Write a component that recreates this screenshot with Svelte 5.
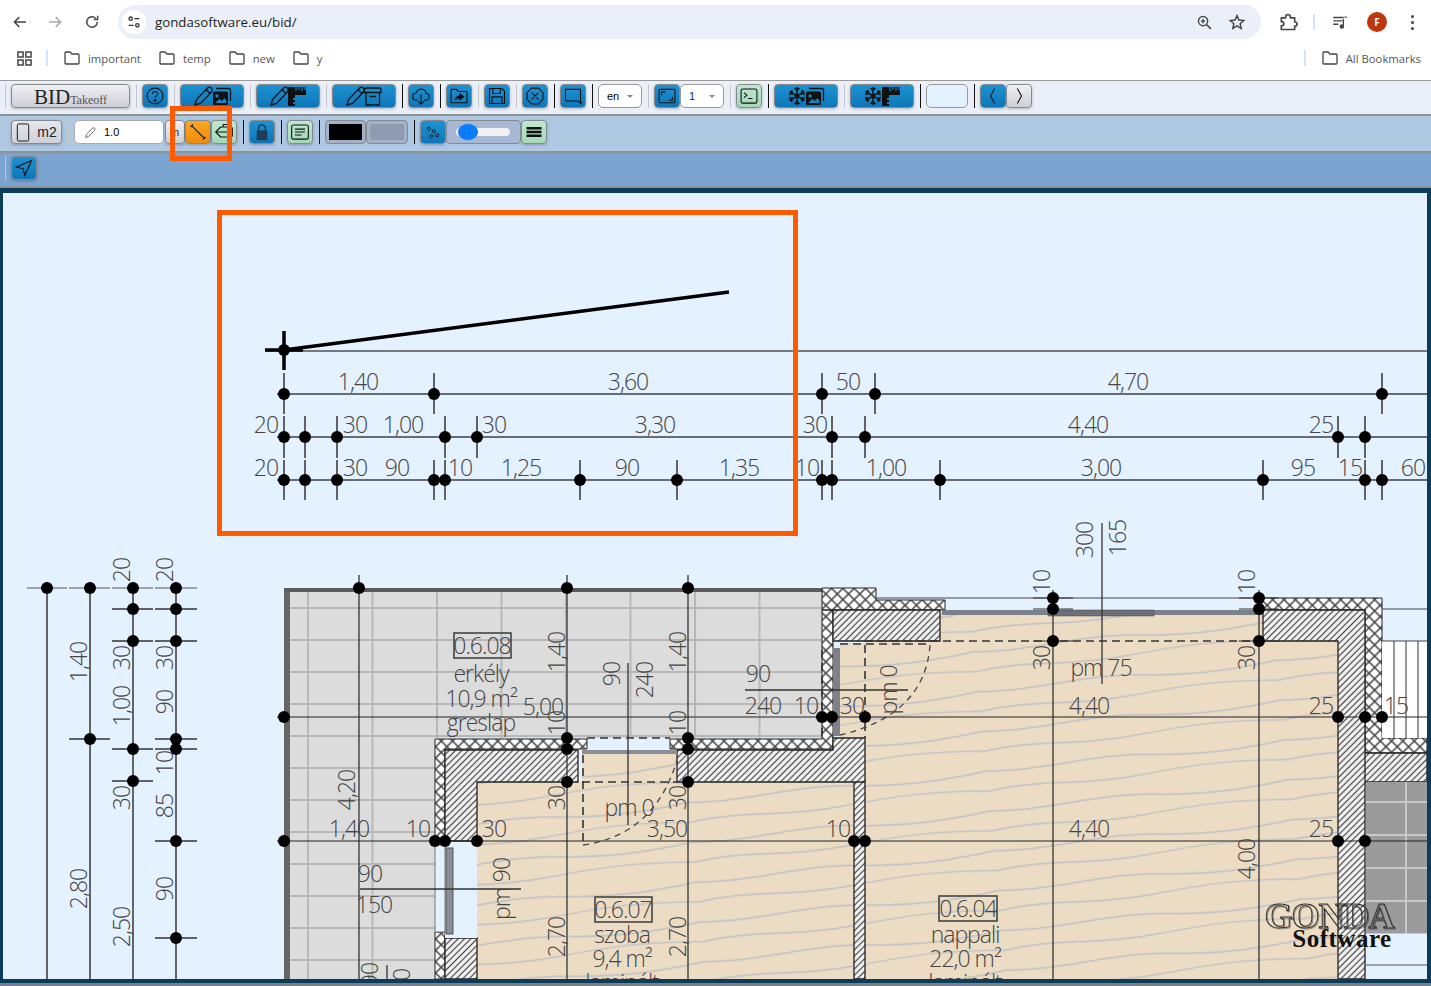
<script>
	// measured drawing data, page coordinates
	const topRows = [
		{ y: 394, t: 373, b: 414, x0: 277, xs: [284, 434, 822, 875, 1382] },
		{ y: 437, t: 416, b: 458, x0: 277, xs: [284, 305, 337, 445, 477, 832, 865, 1338, 1365] },
		{ y: 480, t: 460, b: 500, x0: 277, xs: [284, 305, 337, 434, 445, 580, 677, 822, 832, 940, 1263, 1365, 1382] }
	];
	const leftCols = [
		{ x: 47, l: 27, r: 67, ys: [588] },
		{ x: 90, l: 69, r: 110, ys: [588, 739] },
		{ x: 133, l: 112, r: 153, ys: [588, 609, 641, 749, 781] },
		{ x: 176, l: 155, r: 197, ys: [588, 609, 641, 739, 749, 841, 938] }
	];
	const planH = [
		{ y: 717, xs: [284, 822, 832, 865, 1338, 1365, 1382] },
		{ y: 841, xs: [284, 435, 445, 477, 854, 865, 1338, 1365] }
	];
	const planV = [
		{ x: 359, t: 575, ticks: false, ys: [588] },
		{ x: 567, t: 575, ticks: false, ys: [588, 738, 749, 782] },
		{ x: 688, t: 575, ticks: false, ys: [588, 738, 749, 782] },
		{ x: 1053, t: 590, ticks: true, ys: [598, 609, 641] },
		{ x: 1259, t: 590, ticks: true, ys: [598, 609, 641] }
	];
	const labels = [
		[358, 390, '1,40'], [628, 390, '3,60'], [848, 390, '50'], [1128, 390, '4,70'],
		[266, 433, '20'], [355, 433, '30'], [403, 433, '1,00'], [494, 433, '30'], [655, 433, '3,30'], [815, 433, '30'], [1088, 433, '4,40'], [1321, 433, '25'],
		[266, 476, '20'], [355, 476, '30'], [397, 476, '90'], [460, 476, '10'], [521, 476, '1,25'], [627, 476, '90'], [739, 476, '1,35'], [807, 476, '10'], [886, 476, '1,00'], [1101, 476, '3,00'], [1303, 476, '95'], [1350, 476, '15'], [1413, 476, '60'],
		[543, 715, '5,00'], [758, 682, '90'], [763, 714, '240'], [806, 714, '10'], [852, 714, '30'],
		[629, 816, 'pm 0'], [667, 837, '3,50'], [494, 837, '30'], [838, 837, '10'],
		[349, 837, '1,40'], [418, 837, '10'], [370, 882, '90'], [374, 913, '150'],
		[1101, 676, 'pm 75'], [1089, 714, '4,40'], [1321, 714, '25'], [1396, 714, '15'], [1089, 837, '4,40'], [1321, 837, '25'],
		[481, 682, 'erkély'], [481, 731, 'greslap'], [622, 943, 'szoba'], [965, 943, 'nappali'],
		[622, 991, 'laminált'], [965, 991, 'laminált'],
		[481, 707, '10,9 m²'], [622, 967, '9,4 m²'], [965, 967, '22,0 m²'],
		[482, 654, '0.6.08'], [623, 918, '0.6.07'], [968, 917, '0.6.04']
	];
	const rotated = [
		[130, 570, '20'], [130, 658, '30'], [130, 706, '1,00'], [130, 798, '30'], [130, 927, '2,50'],
		[173, 570, '20'], [173, 658, '30'], [173, 702, '90'], [173, 763, '10'], [173, 806, '85'], [173, 889, '90'],
		[87, 662, '1,40'], [87, 889, '2,80'],
		[565, 652, '1,40'], [686, 652, '1,40'], [620, 674, '90'], [653, 680, '240'],
		[565, 723, '10'], [686, 723, '10'], [565, 798, '30'], [686, 798, '30'], [565, 937, '2,70'], [686, 937, '2,70'],
		[897, 690, 'pm 0'], [510, 870, '90'], [510, 904, 'pm'], [355, 790, '4,20'],
		[378, 975, '90'], [410, 975, '0'],
		[1093, 540, '300'], [1126, 538, '165'], [1050, 582, '10'], [1255, 582, '10'], [1050, 658, '30'], [1255, 658, '30'], [1255, 859, '4,00']
	];
	const roomBoxes = [[454, 633, 57, 25], [595, 897, 57, 25], [939, 896, 58, 25]];
	const stairs = [1394, 1406, 1418];
</script>

{#snippet pencil()}
	<path transform="translate(6 0)" d="M3 21 L4.500 15.500 L15.500 4 Q17.500 2.500 19.500 4 Q21 6 19.500 8 L8.500 19.500 Z M14 5.500 L18 9.500" />
{/snippet}
{#snippet picture(x)}
	<g transform="translate({x} 0)">
		<rect x="3" y="7.500" width="15" height="13.500" rx="1.500" fill="#111" stroke="none" />
		<path d="M6 4.500 H18.500 Q20.500 4.500 20.500 6.500 V17" />
		<circle cx="7" cy="12" r="1.700" fill="#1585c6" stroke="none" />
		<path d="M5 19 L9.500 15 L12 17 L14.500 14 L16.500 17 V19 Z" fill="#1585c6" stroke="none" />
	</g>
{/snippet}
{#snippet ruler(x)}
	<g transform="translate({x} 0)" stroke="none">
		<path fill="#111" d="M0 3 H18 V11 H7 V14 H5 V16 H7 V18 H5 V20 H7 V22 H0 Z" />
		<path d="M8 3 V7 M11 3 V6 M14 3 V7 M17 3 V6" stroke="#1585c6" stroke-width="1.200" />
	</g>
{/snippet}
{#snippet snow()}
	<path transform="translate(7 0)" stroke-width="1.500" d="M10 3 V21 M2.500 7.500 L17.500 16.500 M17.500 7.500 L2.500 16.500 M7.500 4 L10 6.500 L12.500 4 M7.500 20 L10 17.500 L12.500 20 M2 10.500 L5.500 9.500 L4.500 6 M18 10.500 L14.500 9.500 L15.500 6 M2 13.500 L5.500 14.500 L4.500 18 M18 13.500 L14.500 14.500 L15.500 18" />
{/snippet}

<div class="page">
	<header class="chrome">
		<div class="nav">
			<svg class="ic nav-back" viewBox="0 0 24 24"><path d="M20 12 H5 M11 5.500 L4.500 12 L11 18.500" /></svg>
			<svg class="ic nav-fwd" viewBox="0 0 24 24"><path d="M4 12 H19 M13 5.500 L19.500 12 L13 18.500" /></svg>
			<svg class="ic nav-reload" viewBox="0 0 24 24"><path d="M19 12 A7 7 0 1 1 16.800 6.900 M19.500 3.500 V8.500 H14.500" /></svg>
		</div>
		<div class="omnibox">
			<span class="site">
				<svg viewBox="0 0 24 24"><circle cx="7" cy="7" r="2.500" /><path d="M12.500 7 H20 M4 17 H11.500" /><circle cx="17" cy="17" r="2.500" /></svg>
			</span>
			<span class="url">gondasoftware.eu/bid/</span>
			<svg class="ic box-zoom" viewBox="0 0 24 24"><circle cx="10" cy="10" r="6.500" /><path d="M15 15 L21 21 M7 10 H13 M10 7 V13" /></svg>
			<svg class="ic box-star" viewBox="0 0 24 24"><path d="M12 3.500 L14.600 9.300 L21 10 L16.200 14.200 L17.600 20.500 L12 17.200 L6.400 20.500 L7.800 14.200 L3 10 L9.400 9.300 Z" /></svg>
		</div>
		<svg class="ic ext" viewBox="0 0 24 24"><path d="M4 7 H9 Q9 3 12 3 Q15 3 15 7 H20 V12 Q23 12 23 14.500 Q23 17 20 17 V21 H4 V16.500 Q7 16.500 7 14 Q7 11.500 4 11.500 Z" /></svg>
		<i class="div-line"></i>
		<svg class="ic media" viewBox="0 0 24 24"><path d="M3 6 H17 M3 10.500 H15 M3 15 H10 M18 5.500 H21 M16.500 8 V17" /><circle cx="14.500" cy="18" r="2.200" fill="#444" /></svg>
		<span class="avatar">F</span>
		<span class="kebab"><i></i><i></i><i></i></span>
	</header>

	<nav class="bookmarks">
		<svg class="apps" viewBox="0 0 16 16"><path d="M1 1 H6.500 V6.500 H1 Z M9.500 1 H15 V6.500 H9.500 Z M1 9.500 H6.500 V15 H1 Z M9.500 9.500 H15 V15 H9.500 Z" /></svg>
		<i class="div-line sm"></i>
		{#each ['important', 'temp', 'new', 'y'] as name}
			<span class="mark">
				<svg class="folder" viewBox="0 0 16 14"><path d="M1 2 Q1 1 2 1 H6 L8 3 H14 Q15 3 15 4 V12 Q15 13 14 13 H2 Q1 13 1 12 Z" /></svg>
				{name}
			</span>
		{/each}
		<span class="grow"></span>
		<i class="div-line sm"></i>
		<span class="mark last">
			<svg class="folder" viewBox="0 0 16 14"><path d="M1 2 Q1 1 2 1 H6 L8 3 H14 Q15 3 15 4 V12 Q15 13 14 13 H2 Q1 13 1 12 Z" /></svg>
			All Bookmarks
		</span>
	</nav>

	<div class="bar bar1">
		<i class="sep soft"></i>
		<button class="btn gray logo"><b>BID</b><small>Takeoff</small></button>
		<i class="sep soft"></i>
		<button class="btn blue">
			<svg viewBox="0 0 24 24"><circle cx="12" cy="12" r="9.500" /><path d="M8.800 9.500 Q9 6.500 12 6.500 Q15.200 6.500 15.200 9.300 Q15.200 11 13.500 12 Q12 13 12 14.500" /><circle cx="12" cy="17.300" r="1" fill="#111" /></svg>
		</button>
		<i class="sep soft"></i>
		<button class="btn blue wide">
			<svg viewBox="0 0 52 24">{@render pencil()}{@render picture(24)}</svg>
		</button>
		<i class="sep soft"></i>
		<button class="btn blue wide">
			<svg viewBox="0 0 52 24">{@render pencil()}{@render ruler(26)}</svg>
		</button>
		<i class="sep soft"></i>
		<button class="btn blue wide">
			<svg viewBox="0 0 52 24">{@render pencil()}<path d="M26.500 8.500 V6 Q26.500 4 28.500 4 H41 Q43 4 43 6 V8.500 Z M28 8.500 V21 H41.500 V8.500 M31.500 12.500 H38" /></svg>
		</button>
		<i class="sep"></i>
		<button class="btn blue">
			<svg viewBox="0 0 24 24"><path d="M7.500 17 H6 Q1.500 16.500 2 12 Q2.500 8.800 6 8.500 Q7.500 3.500 12.500 3.500 Q17.500 4 18 8.800 Q22.500 9.500 22 13.500 Q21.500 16.500 18 17 H16 M12 10 V22 M8.500 18.500 L12 22 L15.500 18.500" /></svg>
		</button>
		<i class="sep"></i>
		<button class="btn blue">
			<svg viewBox="0 0 24 24"><path d="M2.500 20 V5 Q2.500 4 3.500 4 H9 L11 6.500 H20.500 Q21.500 6.500 21.500 7.500 V20 Z" /><path d="M8 16 Q9 12 13 12 V9.500 L17.500 13 L13 16.500 V14.200 Q10 14.200 8 16 Z" fill="#111" /></svg>
		</button>
		<i class="sep soft"></i>
		<button class="btn blue">
			<svg viewBox="0 0 24 24"><path d="M3 3 H18 L21 6 V21 H3 Z M7 3 V9 H16 V3 M6 21 V13 H18 V21" /></svg>
		</button>
		<i class="sep soft"></i>
		<button class="btn blue">
			<svg viewBox="0 0 24 24"><path d="M8 2.500 H16 L21.500 8 V16 L16 21.500 H8 L2.500 16 V8 Z M8 8 L16 16 M16 8 L8 16" /></svg>
		</button>
		<i class="sep"></i>
		<button class="btn blue">
			<svg viewBox="0 0 24 24"><path d="M3 4 H21 V18 L22 21 L18 18 H5 Q3 18 3 16 Z" /></svg>
		</button>
		<i class="sep"></i>
		<span class="select lang">en<i class="caret"></i></span>
		<i class="sep soft"></i>
		<button class="btn blue">
			<svg viewBox="0 0 24 24"><rect x="2.500" y="4" width="19" height="16" rx="1.500" /><path d="M5.500 11 V7 H10 M18.500 13 V17 H14" /></svg>
		</button>
		<span class="select page-no">1<i class="caret"></i></span>
		<i class="sep soft"></i>
		<button class="btn green">
			<svg viewBox="0 0 24 24"><rect x="2.500" y="3.500" width="19" height="17" rx="2" /><path d="M6 8 L9.500 11 L6 14 M11 15 H16" /></svg>
		</button>
		<i class="sep"></i>
		<button class="btn blue wide">
			<svg viewBox="0 0 52 24">{@render snow()}{@render picture(23)}</svg>
		</button>
		<i class="sep soft"></i>
		<button class="btn blue wide">
			<svg viewBox="0 0 52 24">{@render snow()}{@render ruler(26)}</svg>
		</button>
		<i class="sep"></i>
		<span class="swatch"></span>
		<i class="sep"></i>
		<button class="btn blue">
			<svg viewBox="0 0 24 24"><path d="M14 3 L9 12 L14 21" /></svg>
		</button>
		<button class="btn gray">
			<svg viewBox="0 0 24 24"><path d="M10 3 L15 12 L10 21" /></svg>
		</button>
	</div>

	<div class="bar bar2">
		<i class="sep soft"></i>
		<button class="btn gray unit">
			<svg viewBox="0 0 14 20"><rect x="1" y="1" width="12" height="18" rx="1.500" /></svg>
			m2
		</button>
		<i class="sep soft"></i>
		<span class="size">
			<svg viewBox="0 0 24 24"><path d="M3 21 L4.500 15.500 L15.500 4 Q17.500 2.500 19.500 4 Q21 6 19.500 8 L8.500 19.500 Z" /></svg>
			1.0
		</span>
		<button class="btn gray unit-m">m</button>
		<button class="btn orange">
			<svg viewBox="0 0 24 24"><path d="M4 4 L20 20 M3 6 L6 3 M18 21 L21 18" /></svg>
		</button>
		<button class="btn green">
			<svg viewBox="0 0 24 24"><path d="M2 12 H22 M8 6 L2 12 L8 18 M8 6 H20 Q22 6 22 8 V16 Q22 18 20 18 H8 M11 6 V3 H18" /></svg>
		</button>
		<i class="sep"></i>
		<button class="btn blue">
			<svg class="lock" viewBox="0 0 24 24"><path d="M8 11 V7.500 A4 4 0 0 1 16 7.500 V11" /><rect x="6.500" y="11" width="11" height="10" fill="#1f3e58" /></svg>
		</button>
		<i class="sep"></i>
		<button class="btn green">
			<svg viewBox="0 0 24 24"><rect x="2" y="3.500" width="20" height="17" rx="2" /><path d="M6 8.500 H18 M6 12 H18 M6 15.500 H14" /></svg>
		</button>
		<i class="sep"></i>
		<span class="color black"></span>
		<span class="color slate"></span>
		<i class="sep"></i>
		<button class="btn blue">
			<svg class="dots" viewBox="0 0 24 24"><circle cx="7" cy="8" r="1.800" /><circle cx="13" cy="11" r="1.800" /><circle cx="10" cy="17" r="1.800" /><circle cx="17" cy="16" r="1.800" /></svg>
		</button>
		<span class="slider"><i class="track"></i><i class="thumb"></i></span>
		<button class="btn green">
			<svg viewBox="0 0 24 24"><path class="thick" d="M3 7.500 H21 M3 12 H21 M3 16.500 H21" /></svg>
		</button>
	</div>

	<div class="bar bar3">
		<i class="sep soft"></i>
		<button class="btn blue">
			<svg viewBox="0 0 24 24"><path d="M21 3 L3 11 L11 13 L13 21 Z" /></svg>
		</button>
	</div>

	<main class="stage">
		<svg class="plan" viewBox="3 193 1424 786">
			<defs>
				<pattern id="tiles" patternUnits="userSpaceOnUse" x="242.500" y="575" width="64.500" height="32">
					<rect width="64.500" height="32" fill="#dcdcdc" />
					<path d="M0 1 H64.500 M1 0 V32" stroke="#b8b8b8" stroke-width="2" />
				</pattern>
				<pattern id="wood" patternUnits="userSpaceOnUse" width="300" height="40" patternTransform="rotate(-6)">
					<rect x="-1" y="-1" width="302" height="42" fill="#ecdcc4" />
					<path d="M0 10 C60 3 90 15 150 10 S240 4 300 10 M0 30 C50 36 110 24 160 30 S250 36 300 30" fill="none" stroke="#bfc0c6" stroke-width="1.400" />
				</pattern>
				<pattern id="hatch" patternUnits="userSpaceOnUse" width="4.500" height="4.500" patternTransform="rotate(-45)">
					<rect width="4.500" height="4.500" fill="#f4f4f4" />
					<path d="M0 2.250 H4.500" stroke="#444" stroke-width="1.200" />
				</pattern>
				<pattern id="cross" patternUnits="userSpaceOnUse" width="8" height="8" patternTransform="rotate(45)">
					<rect width="8" height="8" fill="#ffffff" />
					<path d="M0 4 H8 M4 0 V8" stroke="#444" stroke-width="1.500" />
				</pattern>
				<pattern id="slabs" patternUnits="userSpaceOnUse" x="1366" y="782" width="58" height="33">
					<rect width="58" height="33" fill="#9b9b9b" />
					<path d="M0 20 H58 M40 0 V33" stroke="#c8c8c8" stroke-width="2" />
				</pattern>
			</defs>

			<rect x="3" y="193" width="1424" height="786" fill="#e4f1ff" />

			<!-- balcony -->
			<path d="M286 590 H823 V738 H435 V979 H286 Z" fill="url(#tiles)" />
			<path d="M287 979 V589" fill="none" stroke="#666" stroke-width="6" />
			<path d="M284 590 H823" fill="none" stroke="#5c5c5c" stroke-width="4" />

			<!-- floors -->
			<path d="M477 782 H582 V750 H677 V782 H854 V979 H477 Z" fill="url(#wood)" />
			<path d="M840 643 H865 V612 H1338 V979 H865 V738 H840 Z" fill="url(#wood)" />

			<!-- outer layer -->
			<path d="M435 739 H587 V749 H445 V841 H435 Z M670 739 H822 V610 H833 V749 H670 Z M822 588 H876 V600 H945 V610 H822 Z M435 932 H445 V979 H435 Z M1262 598 H1382 V738 H1427 V753 H1365 V610 H1262 Z" fill="url(#cross)" stroke="#222" stroke-width="1" />

			<!-- concrete walls -->
			<path d="M445 750 H578 V782 H477 V841 H445 Z M677 750 H833 V738 H865 V782 H677 Z M854 782 H865 V979 H854 Z M833 610 H940 V641 H833 Z M1263 610 H1365 V979 H1338 V641 H1263 Z M445 938 H477 V979 H445 Z M1365 753 H1427 V782 H1365 Z" fill="url(#hatch)" stroke="#222" stroke-width="1.300" />

			<!-- openings -->
			<rect x="445" y="845" width="32" height="93" fill="#e4f1ff" />
			<rect x="435" y="845" width="10" height="87" fill="#e4f1ff" stroke="#777" />
			<rect x="446" y="848" width="7" height="86" fill="#8a8f96" stroke="#555" />
			<rect x="582" y="750" width="95" height="4" fill="#8a8f96" />
			<rect x="833" y="648" width="7" height="88" fill="#7d828a" />
			<rect x="942" y="610" width="320" height="5" fill="#7d828a" />
			<rect x="1048" y="610" width="106" height="6" fill="#6c7178" stroke="#444" stroke-width="0.500" />
			<rect x="1382" y="641" width="45" height="97" fill="#ffffff" />
			{#each stairs as x}
				<line x1={x} y1="641" x2={x} y2="738" stroke="#333" stroke-width="1" />
			{/each}
			<path d="M1382 641 H1427 M1382 609 H1427 M876 598 H1262" stroke="#444" stroke-width="1.200" fill="none" />
			<rect x="1366" y="782" width="61" height="152" fill="url(#slabs)" />
			<path d="M1366 965 H1427" stroke="#888" stroke-width="1.500" />

			<!-- doors -->
			<path d="M587 738 H670 M582 782 H677 M583 755 V845 M865 641 H1262 M840 644 H930 M865 645 V738 M822 650 V738" fill="none" stroke="#333" stroke-width="1.600" stroke-dasharray="8 5" />
			<path d="M583 845 Q655 835 677 760 M930 645 Q925 715 840 735" fill="none" stroke="#444" stroke-width="1.300" stroke-dasharray="6 5" />

			<!-- dimension lines, top block -->
			<line x1="265" y1="351" x2="1427" y2="351" stroke="#73797f" stroke-width="2" />
			{#each topRows as row}
				<line x1={row.x0} y1={row.y} x2="1427" y2={row.y} stroke="#666c73" stroke-width="2" />
				{#each row.xs as x}
					<line x1={x} y1={row.t} x2={x} y2={row.b} stroke="#333" stroke-width="1.500" />
					<circle cx={x} cy={row.y} r="6" />
				{/each}
			{/each}

			<!-- dimension lines, left block -->
			{#each leftCols as col}
				<line x1={col.x} y1="582" x2={col.x} y2="979" stroke="#555" stroke-width="1.800" />
				{#each col.ys as y}
					<line x1={col.l} y1={y} x2={col.r} y2={y} stroke={y === 588 ? '#888' : '#333'} stroke-width="1.500" />
					<circle cx={col.x} cy={y} r="6" />
				{/each}
			{/each}

			<!-- dimension lines over the plan -->
			{#each planV as line}
				<line x1={line.x} y1={line.t} x2={line.x} y2="979" stroke="#333" stroke-width="1.300" />
				{#each line.ys as y}
					{#if line.ticks}
						<line x1={line.x - 20} y1={y} x2={line.x + 20} y2={y} stroke="#333" stroke-width="1.200" />
					{/if}
					<circle cx={line.x} cy={y} r="6" />
				{/each}
			{/each}
			{#each planH as line}
				<line x1="277" y1={line.y} x2="1427" y2={line.y} stroke="#222" stroke-width="1.200" />
				{#each line.xs as x}
					<circle cx={x} cy={line.y} r="6" />
				{/each}
			{/each}

			<!-- door tags -->
			<path d="M628 663 V825 M745 690 H908 M1102 523 V684 M360 889 H521 M387 965 V979" stroke="#333" stroke-width="1.300" fill="none" />

			<!-- drawn line in progress -->
			<path d="M284 350 L729 292 M265 350 H303 M284 331 V370" stroke="#000" stroke-width="3.500" fill="none" />
			<circle cx="284" cy="350" r="6" />

			{#each roomBoxes as [x, y, w, h]}
				<rect {x} {y} width={w} height={h} fill="none" stroke="#444" stroke-width="1.600" />
			{/each}
			{#each labels as [x, y, text]}
				<text class="dim" {x} {y}>{text}</text>
			{/each}
			{#each rotated as [x, y, text]}
				<text class="dim" transform="translate({x} {y}) rotate(-90)">{text}</text>
			{/each}

			<!-- watermark -->
			<text class="gonda" x="1329" y="928">GONDA</text>
			<text class="software" x="1342" y="947">Software</text>
		</svg>
	</main>

	<!-- highlights added on top of the screenshot -->
	<i class="mark-box tool"></i>
	<i class="mark-box area"></i>
</div>

<style>
	:global(body) {
		background: #fff;
		font-family: "Open Sans", "Liberation Sans", sans-serif;
	}
	.page {
		position: relative;
		width: 1431px;
		height: 986px;
		overflow: hidden;
		display: flex;
		flex-direction: column;
	}

	/* browser */
	.chrome {
		height: 40px;
		padding-top: 5px;
		box-sizing: border-box;
		display: flex;
		align-items: flex-start;
	}
	.ic {
		width: 18px;
		height: 18px;
		fill: none;
		stroke: #474747;
		stroke-width: 2;
		flex: none;
	}
	.nav {
		width: 118px;
		height: 34px;
		display: flex;
		align-items: center;
		padding-left: 11px;
		box-sizing: border-box;
		flex: none;
	}
	.nav-fwd {
		margin-left: 17px;
		stroke: #a8abaf;
	}
	.nav-reload {
		margin-left: 19px;
	}
	.omnibox {
		width: 1143px;
		height: 34px;
		border-radius: 17px;
		background: #ebf0f8;
		display: flex;
		align-items: center;
		padding-left: 4px;
		box-sizing: border-box;
		flex: none;
	}
	.site {
		width: 24px;
		height: 24px;
		border-radius: 50%;
		background: #fff;
		display: flex;
		align-items: center;
		justify-content: center;
	}
	.site svg {
		width: 16px;
		height: 16px;
		fill: none;
		stroke: #333;
		stroke-width: 2;
	}
	.url {
		margin-left: 9px;
		font-size: 13.300px;
		color: #1f1f1f;
		flex: 1;
	}
	.box-zoom {
		width: 17px;
		height: 17px;
		margin-right: 15px;
	}
	.box-star {
		width: 18px;
		height: 18px;
		margin-right: 15px;
	}
	.ext {
		width: 20px;
		height: 20px;
		margin: 7px 0 0 17px;
	}
	.div-line {
		width: 2px;
		height: 16px;
		background: #d3e3fd;
		margin: 9px 0 0 15px;
		flex: none;
	}
	.media {
		width: 18px;
		height: 18px;
		margin: 8px 0 0 16px;
		stroke-width: 1.800;
	}
	.avatar {
		width: 20px;
		height: 20px;
		margin: 7px 0 0 18px;
		border-radius: 50%;
		background: #c0360c;
		color: #fff;
		font-size: 10px;
		font-weight: 700;
		display: flex;
		align-items: center;
		justify-content: center;
	}
	.kebab {
		margin: 10px 0 0 24px;
		display: flex;
		flex-direction: column;
		gap: 3px;
	}
	.kebab i {
		width: 3px;
		height: 3px;
		border-radius: 50%;
		background: #444;
	}

	.bookmarks {
		height: 41px;
		box-sizing: border-box;
		padding: 0 10px 4px 17px;
		display: flex;
		align-items: center;
		border-bottom: 1px solid #9a9a9a;
		font-size: 11.300px;
		color: #555;
	}
	.apps {
		width: 15px;
		height: 15px;
		fill: none;
		stroke: #444;
		stroke-width: 1.600;
	}
	.div-line.sm {
		margin: 0 7px 0 14px;
	}
	.mark {
		display: flex;
		align-items: center;
		gap: 8px;
		margin-left: 9px;
		margin-right: 9px;
	}
	.mark.last {
		margin: 0 0 0 9px;
	}
	.folder {
		width: 16px;
		height: 14px;
		fill: none;
		stroke: #444;
		stroke-width: 1.300;
	}
	.grow {
		flex: 1;
	}

	/* app toolbars */
	.bar {
		display: flex;
		align-items: center;
		padding-bottom: 3px;
		box-sizing: border-box;
		border-bottom: 2px solid #8e9296;
		flex: none;
	}
	.bar1 {
		height: 35px;
		background: #ebf0f8;
	}
	.bar2 {
		height: 37px;
		background: #b0c9e3;
	}
	.bar3 {
		height: 35px;
		background: #7ba4d0;
	}
	.sep {
		width: 1px;
		height: 24px;
		background: #111;
		margin: 0 5.500px;
		flex: none;
	}
	.sep:first-child {
		margin-left: 4.500px;
	}
	.sep.soft {
		background: #c3c7cc;
	}
	.btn {
		width: 26px;
		height: 24px;
		padding: 0;
		box-sizing: border-box;
		border: 1px solid #858a90;
		border-radius: 4px;
		box-shadow: 0 1px 3px rgba(0, 0, 0, 0.250);
		display: flex;
		align-items: center;
		justify-content: center;
		flex: none;
		font-family: "Liberation Sans", sans-serif;
	}
	.btn svg {
		width: 20px;
		height: 20px;
		fill: none;
		stroke: #111;
		stroke-width: 1.300;
	}
	.btn.wide {
		width: 64px;
	}
	.btn.wide svg {
		width: 52px;
		height: 24px;
	}
	.blue {
		background: linear-gradient(#1c93d3, #0e76b8);
	}
	.gray {
		background: linear-gradient(#f0f0f4, #cfcfd6);
	}
	.green {
		background: linear-gradient(#bfe8cf, #a4d8b8);
	}
	.orange {
		background: linear-gradient(#fba726, #f08c0a);
	}
	.btn .thick {
		stroke-width: 3;
	}
	.btn .lock {
		stroke: #1f3e58;
		stroke-width: 1.800;
	}
	.btn .dots {
		stroke-width: 1;
	}
	.logo {
		width: 119px;
		font-family: "Liberation Serif", serif;
		color: #222;
		align-items: baseline;
	}
	.logo b {
		font-size: 21px;
		font-weight: 400;
	}
	.logo small {
		font-size: 12px;
		color: #555;
	}
	.select {
		height: 24px;
		box-sizing: border-box;
		background: #fff;
		border: 1px solid #999;
		border-radius: 5px;
		font: 11px "Liberation Sans", sans-serif;
		display: flex;
		align-items: center;
		padding-left: 8px;
		flex: none;
	}
	.lang {
		width: 44px;
	}
	.page-no {
		width: 44px;
		color: #0a2a80;
	}
	.caret {
		width: 0;
		height: 0;
		border: 3px solid transparent;
		border-top: 3px solid #888;
		border-bottom: 0;
		margin-left: auto;
		margin-right: 8px;
	}
	.swatch {
		width: 42px;
		height: 24px;
		box-sizing: border-box;
		background: #e4f1ff;
		border: 1px solid #999;
		border-radius: 5px;
		flex: none;
	}
	.btn.unit {
		width: 51px;
		font-size: 14px;
		gap: 7px;
		color: #222;
		background: linear-gradient(#e6e6ee, #cfd0da);
	}
	.btn.unit svg {
		width: 14px;
		height: 19px;
		stroke-width: 1;
	}
	.size {
		width: 90px;
		height: 24px;
		box-sizing: border-box;
		background: #fff;
		border: 1px solid #aaa;
		border-radius: 5px;
		display: flex;
		align-items: center;
		gap: 7px;
		padding-left: 9px;
		font: 11px "Liberation Sans", sans-serif;
		flex: none;
	}
	.size svg {
		width: 13px;
		height: 13px;
		fill: none;
		stroke: #666;
		stroke-width: 1.800;
	}
	.btn.unit-m {
		width: 20px;
		margin-left: 1px;
		font-size: 11px;
		color: #222;
		justify-content: flex-start;
		padding-left: 4px;
	}
	.color {
		height: 24px;
		box-sizing: border-box;
		border: 1px solid #858a90;
		border-radius: 4px;
		background: #a4b0c6;
		flex: none;
	}
	.color.black {
		width: 41px;
		padding: 3px;
		background: linear-gradient(#000, #000) content-box, #a4b0c6;
	}
	.color.slate {
		width: 42px;
		padding: 3px;
		background: linear-gradient(#8f9bb0, #8f9bb0) content-box, #a4b0c6;
	}
	.slider {
		position: relative;
		width: 75px;
		height: 24px;
		box-sizing: border-box;
		background: #a6b8d4;
		border: 1px solid #858a90;
		border-radius: 4px;
		display: flex;
		align-items: center;
		flex: none;
	}
	.track {
		width: 54px;
		height: 8px;
		margin-left: 9px;
		border-radius: 4px;
		background: #f0f0f0;
	}
	.thumb {
		position: absolute;
		left: 11px;
		top: 3px;
		width: 20px;
		height: 16px;
		border-radius: 50%;
		background: #0b7dfa;
	}

	/* canvas */
	.stage {
		flex: none;
		background: #0b3c58;
		padding: 5px 4px 4px 3px;
		height: 798px;
		box-sizing: border-box;
		border-bottom: 3px solid #73828c;
	}
	.plan {
		display: block;
		width: 1424px;
		height: 786px;
	}
	.dim {
		font-family: "Open Sans", sans-serif;
		font-weight: 300;
		font-size: 23px;
		letter-spacing: -1px;
		text-anchor: middle;
		fill: #444;
	}
	.gonda {
		font: 700 36px "Liberation Serif", serif;
		text-anchor: middle;
		fill: none;
		stroke: #333;
		stroke-width: 1;
		letter-spacing: -1px;
		filter: drop-shadow(1px 1px 0 rgba(0, 0, 0, 0.400));
	}
	.software {
		font: 700 25px "Liberation Serif", serif;
		text-anchor: middle;
		fill: #111;
		letter-spacing: 0.500px;
	}
	.mark-box {
		position: absolute;
		box-sizing: border-box;
		border-style: solid;
		border-color: #ff5a00;
		pointer-events: none;
	}
	.mark-box.tool {
		left: 170px;
		top: 106px;
		width: 62px;
		height: 55px;
		border-width: 5px;
	}
	.mark-box.area {
		left: 217px;
		top: 210px;
		width: 581px;
		height: 326px;
		border-width: 5px;
	}
</style>
